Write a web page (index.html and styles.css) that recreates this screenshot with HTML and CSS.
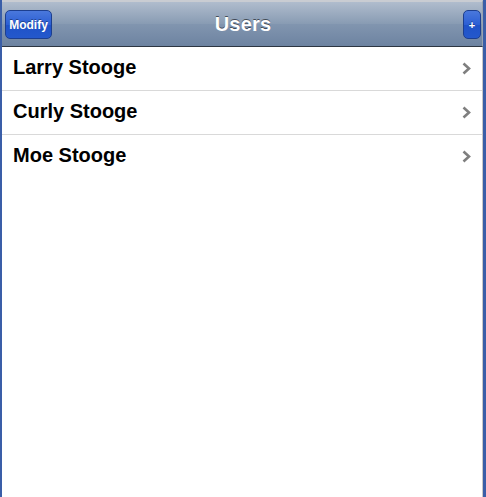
FILE: index.html
```html
<!DOCTYPE html>
<html>
<head>
<meta charset="utf-8">
<link rel="stylesheet" href="styles.css">
</head>
<body>
<div class="frame">
  <div class="toolbar">
    <div class="side side-left"><button class="btn btn-left">Modify</button></div>
    <h1 class="title">Users</h1>
    <div class="side side-right"><button class="btn btn-right">+</button></div>
  </div>
  <ul class="list">
    <li class="row"><span class="name">Larry Stooge</span><span class="chev"><svg width="9" height="13" viewBox="0 0 9 13"><path d="M1.5 1.5 L7 6.5 L1.5 11.5" fill="none" stroke="#7f7f7f" stroke-width="2.6"/></svg></span></li>
    <li class="row"><span class="name">Curly Stooge</span><span class="chev"><svg width="9" height="13" viewBox="0 0 9 13"><path d="M1.5 1.5 L7 6.5 L1.5 11.5" fill="none" stroke="#7f7f7f" stroke-width="2.6"/></svg></span></li>
    <li class="row"><span class="name">Moe Stooge</span><span class="chev"><svg width="9" height="13" viewBox="0 0 9 13"><path d="M1.5 1.5 L7 6.5 L1.5 11.5" fill="none" stroke="#7f7f7f" stroke-width="2.6"/></svg></span></li>
  </ul>
</div>
</body>
</html>
```

FILE: styles.css
```css
html, body {
  margin: 0;
  padding: 0;
  height: 100%;
  background: #ffffff;
}
.frame {
  box-sizing: border-box;
  height: 497px;
  width: 486px;
  border-left: 2px solid #3a5ea8;
  border-right: 3px solid #3a5ea8;
  display: flex;
  flex-direction: column;
  font-family: "Liberation Sans", Arial, sans-serif;
}
.toolbar {
  box-sizing: border-box;
  height: 47px;
  border-top: 2px solid #c9ccd2;
  border-bottom: 1px solid #2d3642;
  border-right: 1px solid #9aa3ae;
  background: linear-gradient(to bottom, #b0bccd 0%, #889bb3 50%, #8195af 51%, #6d83a1 100%);
  display: grid;
  grid-template-columns: 1fr auto 1fr;
  align-items: center;
  padding: 0 1px 0 3px;
}
.side {
  display: flex;
}
.side-right {
  justify-content: flex-end;
}
.title {
  margin: 0;
  font-size: 20px;
  font-weight: bold;
  color: #ffffff;
  text-shadow: 0 -1px 0 rgba(0,0,0,0.55);
  letter-spacing: 0.2px;
}
.btn {
  box-sizing: border-box;
  height: 29px;
  margin-top: 1px;
  border: 1px solid #1d3f8f;
  border-radius: 5px;
  background: linear-gradient(to bottom, #4a78dc 0%, #2c5fd4 50%, #1f52c8 51%, #2458cc 100%);
  color: #ffffff;
  font-family: "Liberation Sans", Arial, sans-serif;
  font-weight: bold;
  font-size: 12px;
  padding: 0;
  text-shadow: 0 -1px 0 rgba(0,0,0,0.35);
}
.btn-left {
  width: 47px;
}
.btn-right {
  width: 18px;
  font-size: 11px;
}
.list {
  list-style: none;
  margin: 0;
  padding: 0;
  flex: 1;
  border-right: 1px solid #c8c8c8;
}
.row {
  box-sizing: border-box;
  height: 44px;
  border-bottom: 1px solid #d9d9d9;
  display: flex;
  align-items: center;
  justify-content: space-between;
  padding: 0 11px 0 11px;
}
.row:last-child {
  border-bottom-color: transparent;
}
.name {
  font-size: 20px;
  font-weight: bold;
  color: #000000;
  position: relative;
  top: -1px;
}
.chev {
  display: flex;
  align-items: center;
}
```
